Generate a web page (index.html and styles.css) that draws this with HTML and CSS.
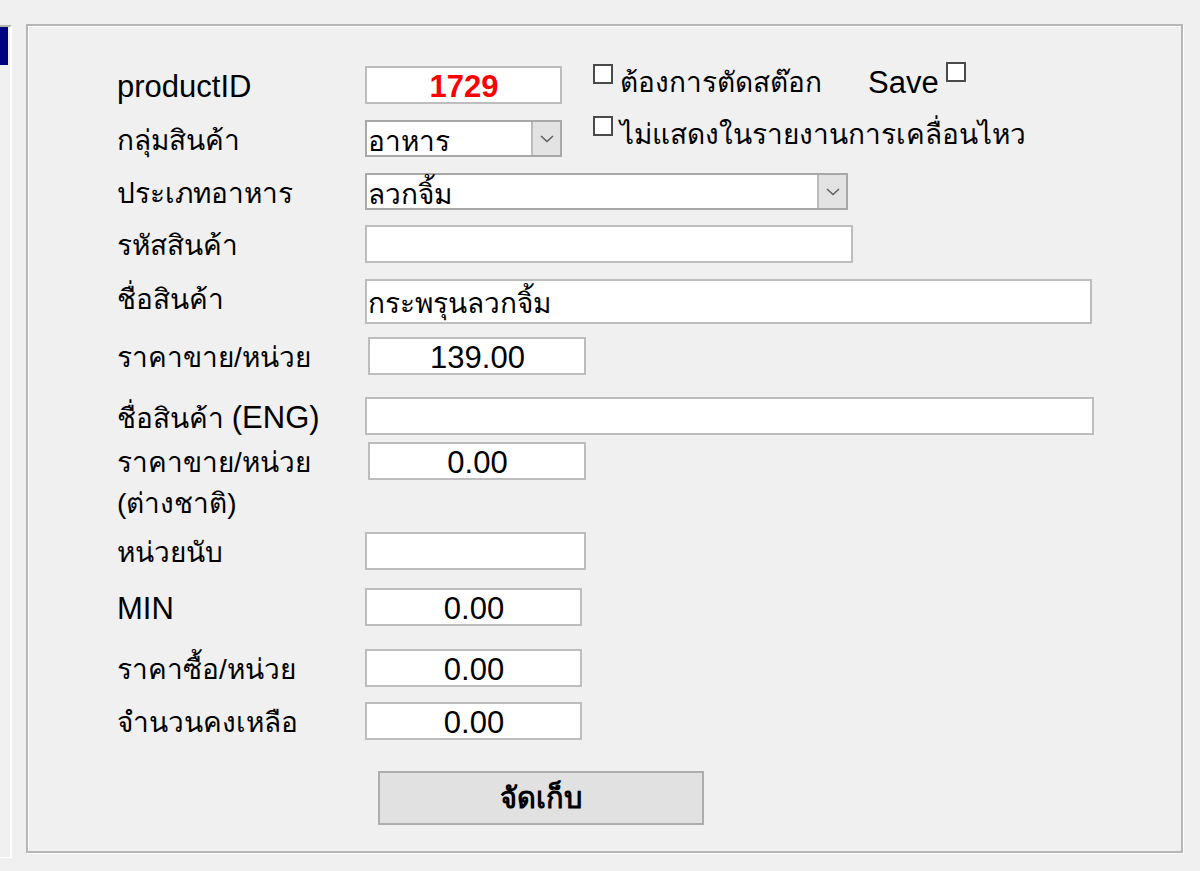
FILE: index.html
```html
<!DOCTYPE html>
<html lang="th">
<head>
    <meta charset="UTF-8">
    <meta name="viewport" content="width=device-width, initial-scale=1.0">
    <title>Product</title>
    <link rel="stylesheet" href="styles.css">
</head>
<body>
    <div class="screen">
        <div class="sidebar">
            <div class="sidebar-tab"></div>
        </div>

        <div class="group">
            <form class="form" onsubmit="return false;">
                <div class="label en">productID</div>
                <div class="field">
                    <input class="box w-197 center en id-text" type="text" value="1729">
                    <div class="checks">
                        <label class="check check-stock"><input type="checkbox"><span>ต้องการตัดสต๊อก</span></label>
                        <label class="check check-save"><span class="en">Save</span><input type="checkbox"></label>
                    </div>
                </div>

                <div class="label">กลุ่มสินค้า</div>
                <div class="field">
                    <div class="combo w-197">
                        <span class="combo-text">อาหาร</span>
                        <span class="combo-btn"><svg width="14" height="8" viewBox="0 0 14 8"><path d="M1 1 L7 6.5 L13 1" fill="none" stroke="#606060" stroke-width="1.6"/></svg></span>
                    </div>
                    <div class="checks">
                        <label class="check check-report"><input type="checkbox"><span>ไม่แสดงในรายงานการเคลื่อนไหว</span></label>
                    </div>
                </div>

                <div class="label">ประเภทอาหาร</div>
                <div class="field">
                    <div class="combo w-483">
                        <span class="combo-text">ลวกจิ้ม</span>
                        <span class="combo-btn"><svg width="14" height="8" viewBox="0 0 14 8"><path d="M1 1 L7 6.5 L13 1" fill="none" stroke="#606060" stroke-width="1.6"/></svg></span>
                    </div>
                </div>

                <div class="label">รหัสสินค้า</div>
                <div class="field">
                    <input class="box w-488" type="text" value="">
                </div>

                <div class="label">ชื่อสินค้า</div>
                <div class="field">
                    <input class="box w-727 tall" type="text" value="กระพรุนลวกจิ้ม">
                </div>

                <div class="label">ราคาขาย/หน่วย</div>
                <div class="field">
                    <input class="box w-218 shift center en" type="text" value="139.00">
                </div>

                <div class="label">ชื่อสินค้า <span class="en">(ENG)</span></div>
                <div class="field">
                    <input class="box w-729" type="text" value="">
                </div>

                <div class="label">ราคาขาย/หน่วย<br>(ต่างชาติ)</div>
                <div class="field">
                    <input class="box w-218 shift center en" type="text" value="0.00">
                </div>

                <div class="label">หน่วยนับ</div>
                <div class="field">
                    <input class="box w-221" type="text" value="">
                </div>

                <div class="label en">MIN</div>
                <div class="field">
                    <input class="box w-217 center en" type="text" value="0.00">
                </div>

                <div class="label">ราคาซื้อ/หน่วย</div>
                <div class="field">
                    <input class="box w-217 center en" type="text" value="0.00">
                </div>

                <div class="label">จำนวนคงเหลือ</div>
                <div class="field">
                    <input class="box w-217 center en" type="text" value="0.00">
                </div>

                <div></div>
                <div class="field">
                    <button type="submit" class="save-btn">จัดเก็บ</button>
                </div>
            </form>
        </div>
    </div>
</body>
</html>
```

FILE: styles.css
```css
body {
    margin: 0;
    padding: 0;
    background-color: #f0f0f0;
    font-family: "Liberation Sans", "Noto Sans", sans-serif;
    font-size: 28px;
    color: #000;
}
.en {
    font-size: 31px;
}
.screen {
    display: flex;
    align-items: flex-start;
    padding-top: 24px;
}
.sidebar {
    width: 12px;
    height: 833px;
    box-sizing: border-box;
    border-top: 2px solid #b4b4b4;
    border-right: 2px solid #fff;
    border-bottom: 1px solid #fff;
    margin-top: 1px;
}
.sidebar-tab {
    width: 8px;
    height: 38px;
    background-color: #000080;
}
.group {
    margin-left: 14px;
    width: 1157px;
    height: 829px;
    box-sizing: border-box;
    border: 2px solid #b6b6b6;
    box-shadow: inset 1px 1px 0 #fff, 1px 1px 0 #fff;
    padding: 40px 0 0 89px;
}
.form {
    display: grid;
    grid-template-columns: 248px auto;
    grid-template-rows: 54px 53px 52px 54px 58px 60px 45px 90px 56px 61px 53px 69px 54px;
    align-items: start;
}
.label {
    line-height: 41px;
    white-space: nowrap;
}
.field {
    display: flex;
    align-items: flex-start;
}
.box {
    height: 38px;
    box-sizing: border-box;
    border: 2px solid #bdbdbd;
    background-color: #fff;
    font-family: inherit;
    font-size: 28px;
    color: #000;
    padding: 4px 0 0 1px;
    margin: 0;
    outline: none;
}
.box.en {
    font-size: 31px;
}
.box.tall {
    height: 45px;
    padding-top: 2px;
}
.center {
    text-align: center;
}
.shift {
    margin-left: 3px;
}
.id-text {
    color: #ff0000;
    font-weight: bold;
}
.w-197 { width: 197px; }
.w-217 { width: 217px; }
.w-218 { width: 218px; }
.w-221 { width: 221px; }
.w-483 { width: 483px; }
.w-488 { width: 488px; }
.w-727 { width: 727px; }
.w-729 { width: 729px; }
.combo {
    height: 37px;
    box-sizing: border-box;
    border: 2px solid #a8a8a8;
    background-color: #fff;
    display: flex;
    align-items: center;
}
.combo-text {
    flex: 1;
    line-height: 33px;
    padding: 5px 0 0 1px;
    white-space: nowrap;
}
.combo-btn {
    width: 29px;
    height: 100%;
    box-sizing: border-box;
    border-left: 2px solid #bcbcbc;
    background-color: #e3e3e3;
    display: flex;
    align-items: center;
    justify-content: center;
}
.checks {
    display: flex;
    margin-left: 31px;
    margin-top: -3px;
}
.check {
    display: flex;
    align-items: flex-start;
    line-height: 40px;
    white-space: nowrap;
}
.check input {
    appearance: none;
    -webkit-appearance: none;
    width: 20px;
    height: 20px;
    box-sizing: border-box;
    border: 2px solid #4a4a4a;
    background-color: #fff;
    margin: 1px 7px 0 0;
}
.check-stock {
    width: 275px;
}
.check-save input {
    margin: -1px 0 0 7px;
}
.check-report {
    margin-top: -2px;
}
.save-btn {
    margin-left: 13px;
    width: 326px;
    height: 54px;
    box-sizing: border-box;
    border: 2px solid #adadad;
    background-color: #e1e1e1;
    font-family: inherit;
    font-size: 29px;
    font-weight: bold;
    color: #000;
    cursor: pointer;
}
.save-btn:hover {
    background-color: #e5f1fb;
}
```
